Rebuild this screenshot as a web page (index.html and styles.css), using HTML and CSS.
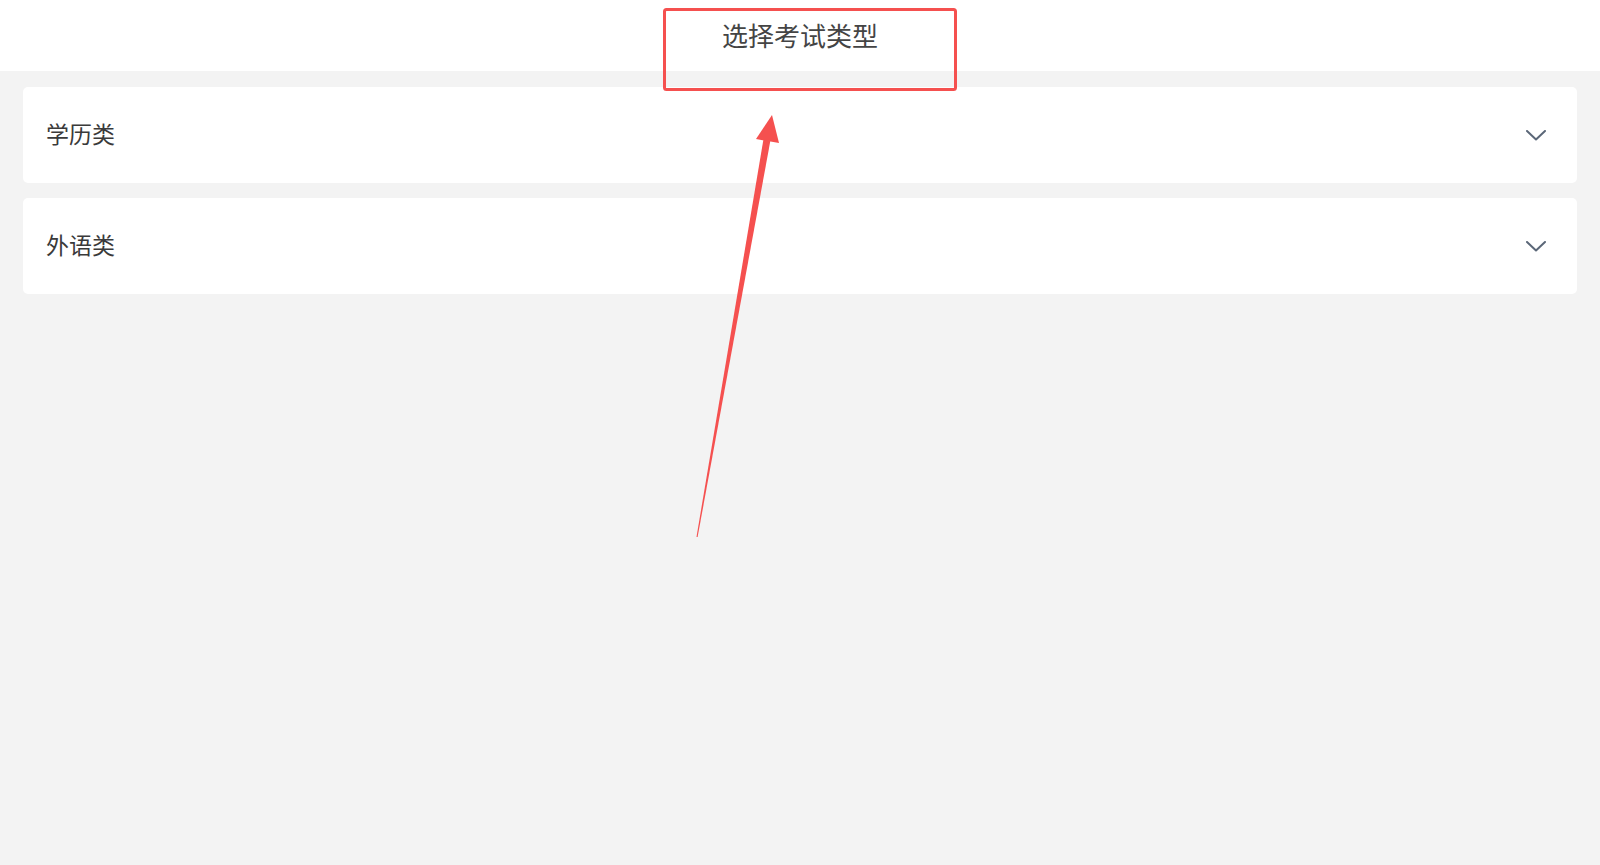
FILE: index.html
```html
<!DOCTYPE html>
<html lang="zh-CN">
<head>
    <meta charset="UTF-8">
    <meta name="viewport" content="width=device-width, initial-scale=1.0">
    <title>选择考试类型</title>
    <link rel="stylesheet" href="styles.css">
</head>
<body>
    <div class="header">
        <h1>选择考试类型</h1>
    </div>

    <!-- Exam categories -->
    <div class="list">
        <div class="item">
            <span class="item-name">学历类</span>
            <svg class="chevron" width="20" height="11" viewBox="0 0 20 11">
                <polyline points="1,1 10,9.5 19,1" fill="none" stroke="#5b6778" stroke-width="2" stroke-linecap="round" stroke-linejoin="round"/>
            </svg>
        </div>
        <div class="item">
            <span class="item-name">外语类</span>
            <svg class="chevron" width="20" height="11" viewBox="0 0 20 11">
                <polyline points="1,1 10,9.5 19,1" fill="none" stroke="#5b6778" stroke-width="2" stroke-linecap="round" stroke-linejoin="round"/>
            </svg>
        </div>
    </div>

    <!-- Annotation drawn over the page -->
    <svg class="annotation" width="1600" height="865" viewBox="0 0 1600 865">
        <rect x="664.5" y="9.5" width="291" height="80" rx="2" fill="none" stroke="#f5504f" stroke-width="3"/>
        <polygon points="696.5,537 697.6,537 770.5,140 763.5,139" fill="#f5504f"/>
        <polygon points="772,115 756,139 779,143" fill="#f5504f"/>
    </svg>
</body>
</html>
```

FILE: styles.css
```css
body {
    margin: 0;
    padding: 0;
    height: 865px;
    overflow: hidden;
    background-color: #f3f3f3;
    font-family: "Noto Sans CJK SC", "Noto Sans", sans-serif;
}
.header {
    height: 71px;
    background-color: white;
    text-align: center;
}
.header h1 {
    margin: 0;
    font-size: 26px;
    font-weight: normal;
    line-height: 70px;
    color: #444;
}
.list {
    display: flex;
    flex-direction: column;
    gap: 15px;
    padding: 16px 23px;
}
.item {
    height: 96px;
    display: flex;
    align-items: center;
    justify-content: space-between;
    padding: 0 31px 0 23px;
    background-color: white;
    border-radius: 5px;
}
.item-name {
    font-size: 23px;
    line-height: 1;
    padding-bottom: 3px;
    color: #3a3a3a;
}
.chevron {
    display: block;
}
.annotation {
    position: absolute;
    top: 0;
    left: 0;
    pointer-events: none;
}
```
